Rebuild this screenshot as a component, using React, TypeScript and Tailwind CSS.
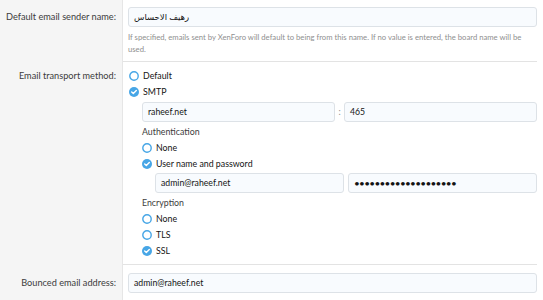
import React from 'react';

// ============================================================================
// Small pieces
// ============================================================================

const Radio: React.FC<{ checked?: boolean }> = ({ checked = false }) => (
  <svg width="10" height="10" viewBox="0 0 10 10" className="shrink-0">
    {checked ? (
      <>
        <circle cx="5" cy="5" r="5" fill="#47a6e6" />
        <path d="M2.7 5.1 L4.3 6.6 L7.3 3.5" fill="none" stroke="#fff" strokeWidth="1.4" strokeLinecap="round" strokeLinejoin="round" />
      </>
    ) : (
      <circle cx="5" cy="5" r="4.2" fill="#fff" stroke="#47a6e6" strokeWidth="1.4" />
    )}
  </svg>
);

const Option: React.FC<{ label: string; checked?: boolean }> = ({ label, checked }) => (
  <div className="flex h-4 items-center gap-[4px]">
    <Radio checked={checked} />
    <span className="text-[8.8px] text-[#141414]">{label}</span>
  </div>
);

const Input: React.FC<{ value: string; className?: string; textClass?: string }> = ({
  value,
  className = '',
  textClass = 'text-[8.7px]',
}) => (
  <div
    className={`flex h-[20px] items-center rounded-[3px] border border-[#dde2e7] bg-[#f8fbfe] px-[5px] text-[#141414] ${className}`}
  >
    <span className={textClass}>{value}</span>
  </div>
);

const Label: React.FC<{ children: React.ReactNode; className?: string }> = ({ children, className = '' }) => (
  <div className={`whitespace-nowrap border-r border-[#e6e6e6] bg-[#f5f5f5] pr-[6px] text-right text-[9.2px] text-[#3c3c3c] ${className}`}>
    {children}
  </div>
);

// ============================================================================
// App
// ============================================================================

export default function App() {
  return (
    <div
      className="h-[300px] w-[543px] overflow-hidden bg-white"
      style={{ fontFamily: 'Lato, "DejaVu Sans", sans-serif' }}
    >
      <div className="grid grid-cols-[123px_1fr] pr-[6px]">
        {/* Default email sender name */}
        <Label className="pt-[7px]">
          <div className="flex h-[20px] items-center justify-end">Default email sender name:</div>
        </Label>
        <div className="border-b border-[#e3e3e3] pl-[5px] pt-[7px] pb-[6px]">
          <Input value="رهيف الاحساس" textClass="text-[8.5px]" />
          <p className="mt-[4px] text-[7.7px] leading-[12px] text-[#8f8f8f]">
            If specified, emails sent by XenForo will default to being from this name. If no value is entered, the board name will be used.
          </p>
        </div>

        {/* Email transport method */}
        <Label className="pt-[6px]">
          <div className="flex h-4 items-center justify-end">Email transport method:</div>
        </Label>
        <div className="border-b border-[#e3e3e3] pl-[6px] pt-[6px] pb-[5px]">
          <Option label="Default" />
          <Option label="SMTP" checked />
          <div className="pl-[13px]">
            <div className="mt-[2px] flex items-center">
              <Input value="raheef.net" className="flex-1" />
              <span className="w-[9px] text-center text-[9px] text-[#8f8f8f]">:</span>
              <Input value="465" className="flex-1" />
            </div>
            <div className="mt-[2px] flex h-4 items-center text-[8.8px] text-[#3c3c3c]">Authentication</div>
            <Option label="None" />
            <Option label="User name and password" checked />
            <div className="pl-[13px]">
              <div className="mt-[1px] flex items-center gap-[4px]">
                <Input value="admin@raheef.net" className="flex-1" />
                <Input value="••••••••••••••••••••" className="flex-1" textClass="text-[10px] tracking-[-0.7px]" />
              </div>
            </div>
            <div className="mt-[2px] flex h-4 items-center text-[8.8px] text-[#3c3c3c]">Encryption</div>
            <Option label="None" />
            <Option label="TLS" />
            <Option label="SSL" checked />
          </div>
        </div>

        {/* Bounced email address */}
        <Label className="pt-[8px]">
          <div className="flex h-[20px] items-center justify-end">Bounced email address:</div>
        </Label>
        <div className="pl-[5px] pt-[8px]">
          <Input value="admin@raheef.net" />
          <p className="mt-[4px] text-[7.7px] leading-[12px] text-[#8f8f8f]">
            Emails that bounce will be returned to this address. If no value is entered, the default email address will be used.
          </p>
        </div>
      </div>
    </div>
  );
}
